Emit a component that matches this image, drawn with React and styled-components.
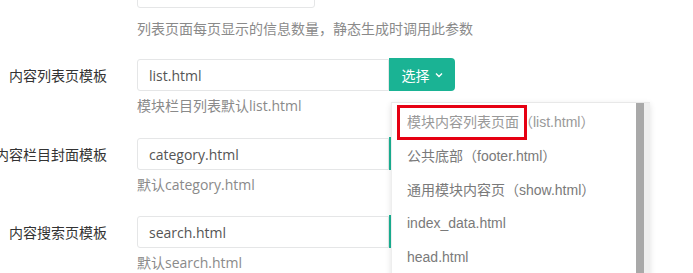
import React from "react";
import styled, { createGlobalStyle } from "styled-components";

const Global = createGlobalStyle`
  html, body { margin: 0; padding: 0; background: #fff; overflow: hidden; }
  body { font-family: "Open Sans", "Noto Sans CJK SC", sans-serif; font-size: 14px; color: #333; }
`;

const Page = styled.div`
  position: relative;
  width: 693px;
  height: 273px;
  overflow: hidden;
`;

const Form = styled.div`
  display: flex;
  flex-direction: column;
  margin-top: -24px;
`;

const Group = styled.div`
  display: flex;
  align-items: flex-start;
  gap: 30px;
  margin-bottom: ${(p) => p.$mb}px;
`;

const Label = styled.div`
  width: 107px;
  flex: none;
  height: 32px;
  display: flex;
  align-items: center;
  justify-content: flex-end;
  white-space: nowrap;
  color: #333;
  font-size: 14px;
`;

const Control = styled.div`
  display: flex;
  flex-direction: column;
`;

const InputRow = styled.div`
  display: flex;
`;

const Input = styled.div`
  box-sizing: border-box;
  width: ${(p) => p.$w}px;
  height: 32px;
  border: 1px solid #e5e6e7;
  border-radius: ${(p) => (p.$alone ? "3px" : "3px 0 0 3px")};
  padding: 0 11px;
  display: flex;
  align-items: center;
  color: #555;
  font-size: 14px;
`;

const SelectButton = styled.div`
  box-sizing: border-box;
  width: 66px;
  height: 33px;
  margin-top: -1px;
  background: #1ab394;
  color: #fff;
  border-radius: 0 4px 4px 0;
  display: flex;
  align-items: center;
  justify-content: center;
  gap: 5px;
  font-size: 14px;
`;

const Help = styled.div`
  margin-top: ${(p) => p.$mt}px;
  line-height: 20px;
  color: #8a8a8a;
  font-size: 14px;
  white-space: nowrap;
`;

const Dropdown = styled.div`
  position: absolute;
  left: 391px;
  top: 102px;
  width: 258px;
  height: 200px;
  display: flex;
  background: #fff;
  border-top: 1px solid #e8e8e8;
  border-left: 1px solid #eee;
  box-shadow: 0 2px 6px rgba(0, 0, 0, 0.12);
`;

const List = styled.ul`
  list-style: none;
  margin: 0;
  padding: 0;
  flex: 1;
  font-family: "Liberation Sans", "Noto Sans CJK SC", sans-serif;
`;

const Item = styled.li`
  position: relative;
  height: 34px;
  padding-left: 15px;
  display: flex;
  align-items: center;
  color: ${(p) => (p.$dim ? "#999" : "#7a7a7a")};
  font-size: 14px;
  white-space: nowrap;
  &:first-child { margin-top: 1px; }
`;

const Highlight = styled.span`
  position: absolute;
  left: 5px;
  top: 1px;
  width: 130px;
  height: 35px;
  box-sizing: border-box;
  border: 3px solid #e60012;
`;

const Scrollbar = styled.div`
  width: 8px;
  background: #a9a9a9;
  flex: none;
`;

const Track = styled.div`
  width: 6px;
  background: #efefef;
  flex: none;
`;

const Chevron = () => (
  <svg width="8" height="6" viewBox="0 0 8 6" fill="none">
    <path d="M1 1.5 L4 4.5 L7 1.5" stroke="#fff" strokeWidth="1.4" />
  </svg>
);

const rows = [
  { label: "内容列表页模板", value: "list.html", help: "模块栏目列表默认list.html", mb: 22 },
  { label: "内容栏目封面模板", value: "category.html", help: "默认category.html", mb: 21 },
  { label: "内容搜索页模板", value: "search.html", help: "默认search.html", mb: 0 },
];

const items = [
  { text: "模块内容列表页面（list.html）", hl: true },
  { text: "公共底部（footer.html）" },
  { text: "通用模块内容页（show.html）" },
  { text: "index_data.html" },
  { text: "head.html" },
];

export default function App() {
  return (
    <Page>
      <Global />
      <Form>
        <Group $mb={20}>
          <Label />
          <Control>
            <Input $w={178} $alone />
            <Help $mt={11}>列表页面每页显示的信息数量，静态生成时调用此参数</Help>
          </Control>
        </Group>
        {rows.map((r) => (
          <Group key={r.label} $mb={r.mb}>
            <Label>{r.label}</Label>
            <Control>
              <InputRow>
                <Input $w={252}>{r.value}</Input>
                <SelectButton>
                  选择 <Chevron />
                </SelectButton>
              </InputRow>
              <Help $mt={5}>{r.help}</Help>
            </Control>
          </Group>
        ))}
      </Form>
      <Dropdown>
        <List>
          {items.map((it) => (
            <Item key={it.text} $dim={it.hl}>
              {it.hl && <Highlight />}
              {it.text}
            </Item>
          ))}
        </List>
        <Scrollbar />
        <Track />
      </Dropdown>
    </Page>
  );
}
